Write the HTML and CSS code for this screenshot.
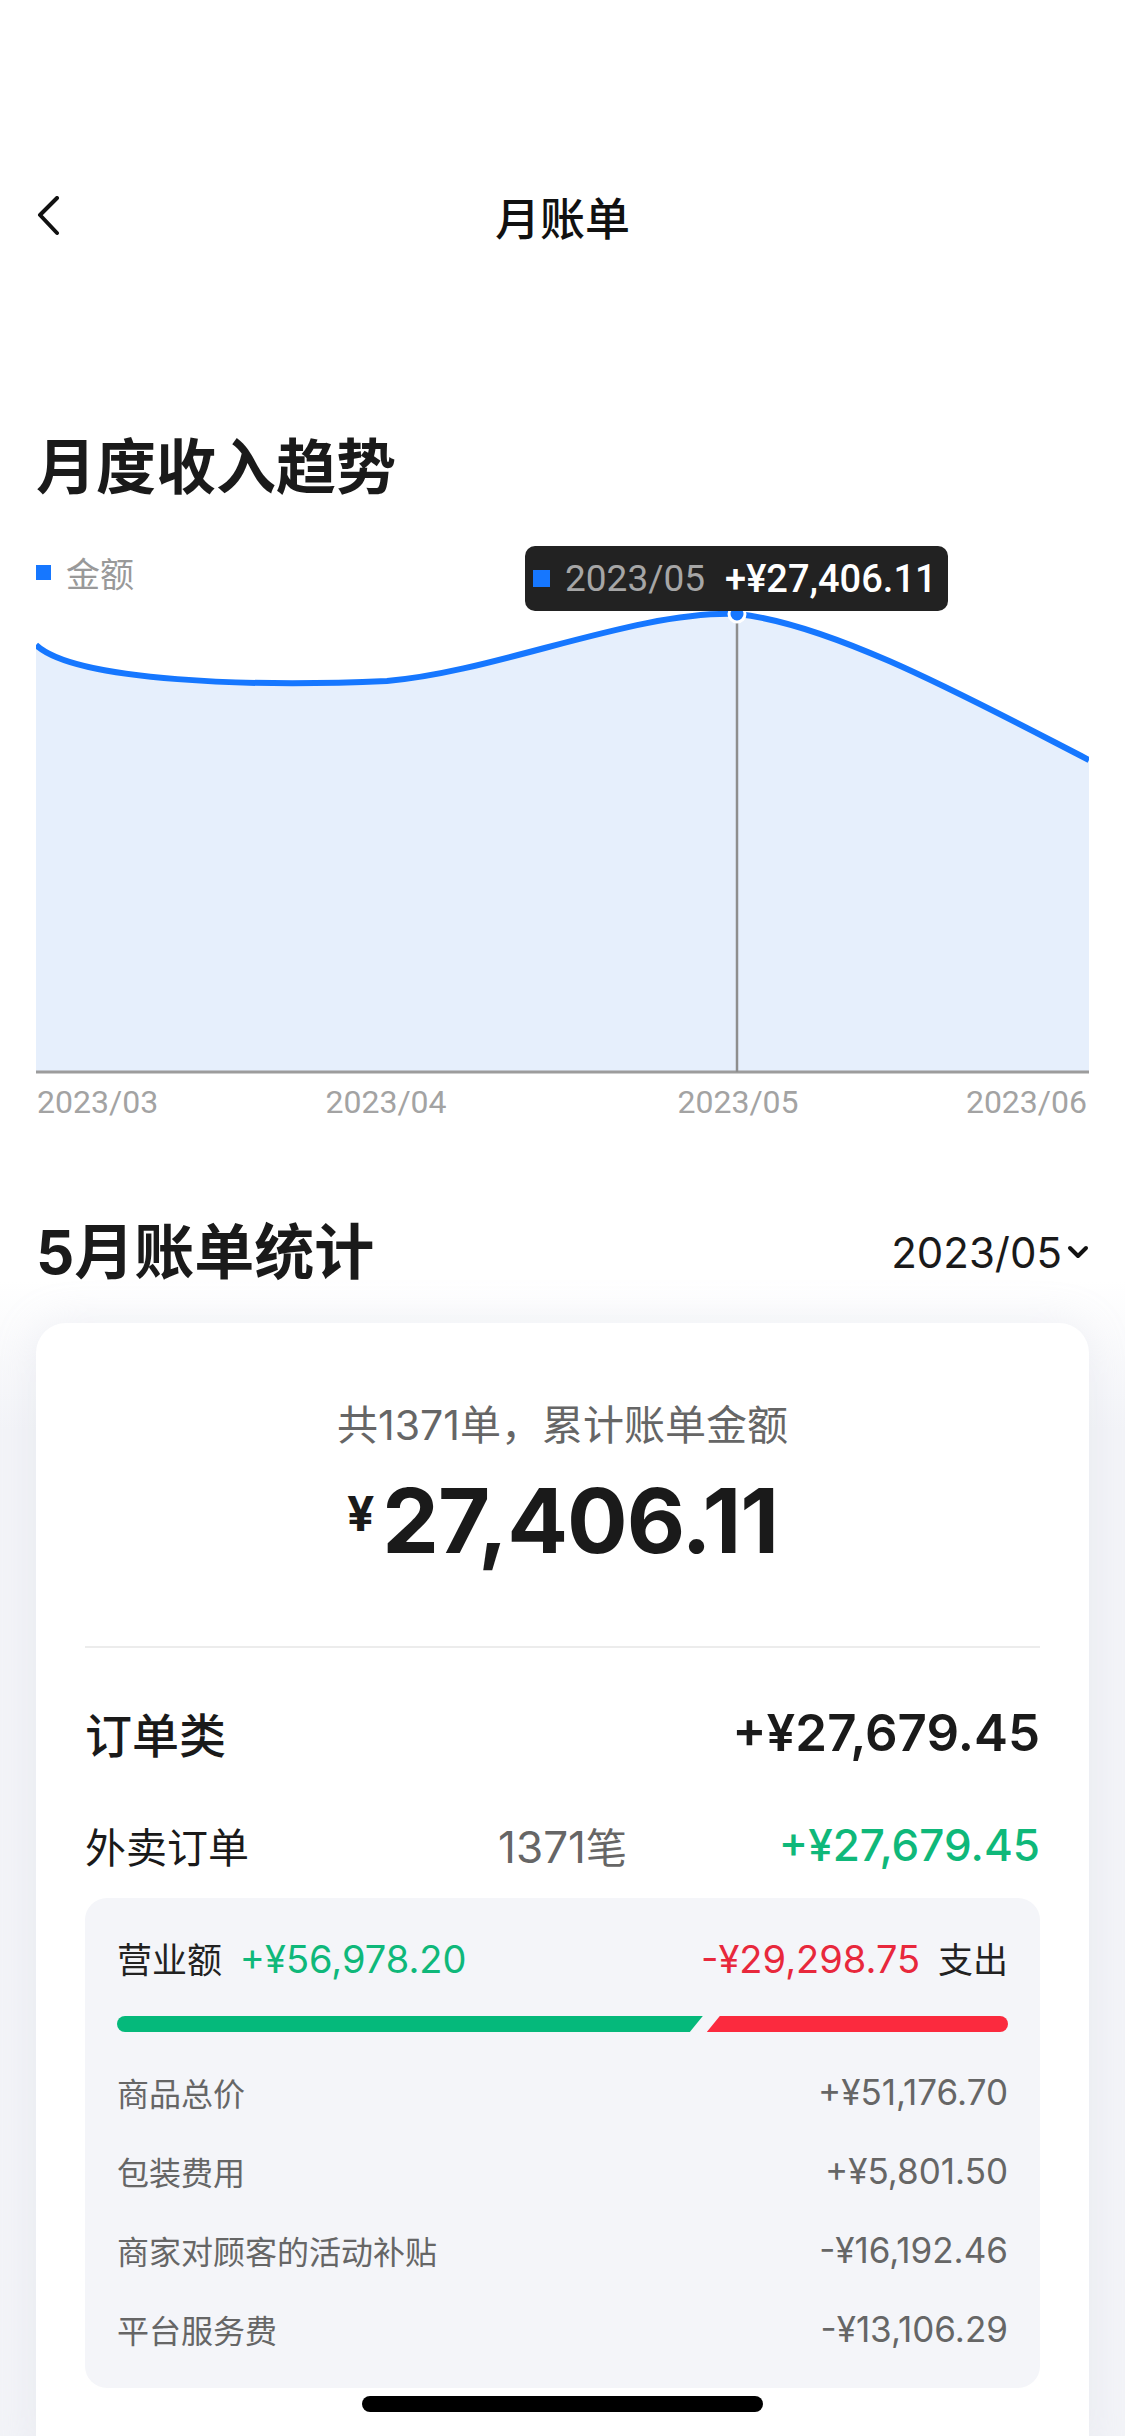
FILE: index.html
```html
<!DOCTYPE html>
<html lang="zh-CN">
<head>
    <meta charset="UTF-8">
    <meta name="viewport" content="width=device-width, initial-scale=1.0">
    <title>月账单</title>
    <link rel="stylesheet" href="styles.css">
</head>
<body>
    <div class="status-bar"></div>

    <header class="navbar">
        <button class="back-btn" aria-label="返回">
            <svg width="24" height="40" viewBox="0 0 24 40">
                <path d="M20 2 L3 19 L20 37" fill="none" stroke="#111" stroke-width="4" stroke-linecap="round" stroke-linejoin="round"/>
            </svg>
        </button>
        <h1 class="nav-title">月账单</h1>
        <span></span>
    </header>

    <!-- 月度收入趋势 -->
    <section class="trend">
        <h2 class="section-title">月度收入趋势</h2>
        <div class="chart">
            <div class="legend">
                <span class="legend-mark"></span>
                <span>金额</span>
            </div>
            <div class="tooltip">
                <span class="legend-mark"></span>
                <span class="tooltip-date">2023/05</span>
                <span class="tooltip-value">+¥27,406.11</span>
            </div>
            <svg class="chart-svg" width="1053" height="538" viewBox="0 0 1053 538">
                <path class="chart-area" d="M0 53 C40 90 220 95 351 89 C460 80 600 18 702 22 C800 33 940 110 1053 168 L1053 480 L0 480 Z"/>
                <path class="chart-line" d="M0 53 C40 90 220 95 351 89 C460 80 600 18 702 22 C800 33 940 110 1053 168"/>
                <line class="chart-axis" x1="0" y1="480" x2="1053" y2="480"/>
                <line class="chart-pointer" x1="701" y1="24" x2="701" y2="480"/>
                <circle class="chart-dot" cx="701" cy="22" r="8"/>
                <text class="chart-label" x="1" y="521" text-anchor="start">2023/03</text>
                <text class="chart-label" x="350" y="521" text-anchor="middle">2023/04</text>
                <text class="chart-label" x="702" y="521" text-anchor="middle">2023/05</text>
                <text class="chart-label" x="1051" y="521" text-anchor="end">2023/06</text>
            </svg>
        </div>
    </section>

    <!-- 5月账单统计 -->
    <section class="bill">
        <div class="bill-header">
            <h2 class="section-title">5月账单统计</h2>
            <button class="month-picker">
                <span>2023/05</span>
                <svg width="22" height="14" viewBox="0 0 22 14">
                    <path d="M3 3 L11 11 L19 3" fill="none" stroke="#111" stroke-width="4" stroke-linecap="round" stroke-linejoin="round"/>
                </svg>
            </button>
        </div>

        <div class="bill-card">
            <p class="summary">共1371单，累计账单金额</p>
            <div class="total">
                <span class="total-currency">¥</span>
                <span class="total-value">27,406.11</span>
            </div>

            <div class="divider"></div>

            <div class="category-row">
                <span>订单类</span>
                <span class="category-amount">+¥27,679.45</span>
            </div>

            <div class="order-row">
                <span class="order-name">外卖订单</span>
                <span class="order-count"><span class="num">1371</span>笔</span>
                <span class="order-amount">+¥27,679.45</span>
            </div>

            <div class="detail-box">
                <div class="flow-row">
                    <div>
                        <span>营业额</span>
                        <span class="income">+¥56,978.20</span>
                    </div>
                    <div>
                        <span class="expense">-¥29,298.75</span>
                        <span>支出</span>
                    </div>
                </div>
                <div class="flow-bar">
                    <div class="bar-income" style="flex-grow: 56978.2"></div>
                    <div class="bar-expense" style="flex-grow: 29298.75"></div>
                </div>
                <ul class="detail-list">
                    <li><span>商品总价</span><span class="detail-value">+¥51,176.70</span></li>
                    <li><span>包装费用</span><span class="detail-value">+¥5,801.50</span></li>
                    <li><span>商家对顾客的活动补贴</span><span class="detail-value">-¥16,192.46</span></li>
                    <li><span>平台服务费</span><span class="detail-value">-¥13,106.29</span></li>
                </ul>
            </div>
        </div>
    </section>

    <div class="home-indicator"></div>
</body>
</html>
```

FILE: styles.css
```css
body {
    margin: 0;
    width: 1125px;
    background-color: #ffffff;
    color: #1a1a1a;
    font-family: Inter, "Noto Sans CJK SC", sans-serif;
    overflow: hidden;
}

.status-bar {
    height: 150px;
}

/* top navigation */
.navbar {
    height: 132px;
    display: grid;
    grid-template-columns: 1fr auto 1fr;
    align-items: center;
    padding: 0 37px;
}

.back-btn {
    justify-self: start;
    padding: 0;
    border: none;
    background: none;
    display: flex;
}

.nav-title {
    margin: 0;
    font-size: 45px;
    font-weight: 500;
    color: #111;
}

.section-title {
    margin: 0;
    font-size: 60px;
    line-height: 72px;
    font-weight: 700;
    color: #1a1a1a;
}

/* trend chart */
.trend {
    padding: 149px 36px 0;
}

.chart {
    position: relative;
    margin-top: 49px;
}

.legend {
    height: 40px;
    display: flex;
    align-items: center;
    gap: 15px;
    font-size: 34px;
    color: #999;
}

.legend-mark {
    width: 15px;
    height: 15px;
    background-color: #1677ff;
}

.chart-svg {
    display: block;
}

.chart-area {
    fill: #e6effc;
}

.chart-line {
    fill: none;
    stroke: #1677ff;
    stroke-width: 6;
}

.chart-axis {
    stroke: #9c9c9c;
    stroke-width: 3;
}

.chart-pointer {
    stroke: #8e8e8e;
    stroke-width: 2.5;
}

.chart-dot {
    fill: #1677ff;
    stroke: #ffffff;
    stroke-width: 3;
}

.chart-label {
    font-family: Roboto, sans-serif;
    font-size: 32px;
    fill: #a3a3a3;
}

.tooltip {
    position: absolute;
    top: -6px;
    left: 489px;
    height: 65px;
    padding: 0 11px 0 8px;
    display: flex;
    align-items: center;
    border-radius: 10px;
    background-color: #222;
    font-family: Roboto, sans-serif;
    font-size: 37px;
    white-space: nowrap;
}

.tooltip .legend-mark {
    width: 17px;
    height: 17px;
}

.tooltip-date {
    margin-left: 15px;
    color: #a6a6a6;
}

.tooltip-value {
    margin-left: 20px;
    color: #ffffff;
    font-size: 38px;
    font-weight: 500;
}

/* monthly bill */
.bill {
    padding: 86px 36px 0;
    background: linear-gradient(to bottom, #ffffff 0, #ffffff 150px, #f3f4f8 300px);
}

.bill-header {
    display: flex;
    justify-content: space-between;
    align-items: center;
}

.month-picker {
    display: flex;
    align-items: center;
    gap: 5px;
    padding: 0;
    border: none;
    background: none;
    font-family: inherit;
    font-size: 42px;
    color: #1a1a1a;
}

.bill-card {
    margin-top: 35px;
    padding: 77px 49px 80px;
    background-color: #ffffff;
    border-radius: 30px;
    box-shadow: 0 0 40px rgba(200, 205, 220, 0.25);
}

.summary {
    margin: 0;
    text-align: center;
    font-size: 41px;
    line-height: 50px;
    color: #666;
}

.total {
    margin-top: 16px;
    height: 110px;
    display: flex;
    justify-content: center;
    align-items: flex-start;
    font-weight: 700;
    color: #1a1a1a;
}

.total-currency {
    margin-top: 26px;
    margin-right: 8px;
    font-size: 48px;
    line-height: 44px;
}

.total-value {
    font-size: 90px;
    line-height: 110px;
    letter-spacing: -1px;
}

.divider {
    margin-top: 70px;
    height: 2px;
    background-color: #ececec;
}

.category-row {
    margin-top: 49px;
    height: 70px;
    display: flex;
    justify-content: space-between;
    align-items: center;
    font-size: 47px;
    font-weight: 500;
}

.category-amount {
    font-size: 51px;
    font-weight: 600;
}

.order-row {
    margin-top: 48px;
    height: 60px;
    display: grid;
    grid-template-columns: 1fr auto 1fr;
    align-items: center;
    font-size: 41px;
}

.order-count {
    color: #666;
}

.order-count .num {
    font-size: 44px;
}

.order-amount {
    justify-self: end;
    color: #0fb87a;
    font-size: 44px;
    font-weight: 500;
}

.detail-box {
    margin-top: 23px;
    padding: 34px 32px 20px;
    background-color: #f4f5f9;
    border-radius: 22px;
}

.flow-row {
    height: 50px;
    display: flex;
    justify-content: space-between;
    align-items: center;
    font-size: 35px;
    color: #222;
}

.income {
    margin-left: 8px;
    color: #0fb87a;
    font-size: 38px;
}

.expense {
    margin-right: 8px;
    color: #e8283c;
    font-size: 38px;
}

.flow-bar {
    margin-top: 34px;
    height: 16px;
    display: flex;
    gap: 4px;
}

.bar-income {
    background-color: #05b97b;
    border-radius: 8px 0 0 8px;
    clip-path: polygon(0 0, 100% 0, calc(100% - 13px) 100%, 0 100%);
}

.bar-expense {
    background-color: #fb2a3e;
    border-radius: 0 8px 8px 0;
    clip-path: polygon(13px 0, 100% 0, 100% 100%, 0 100%);
}

.detail-list {
    margin: 20px 0 0;
    padding: 0;
    list-style: none;
}

.detail-list li {
    height: 79px;
    display: flex;
    justify-content: space-between;
    align-items: center;
    font-size: 32px;
    color: #666;
}

.detail-value {
    font-size: 35px;
}

.home-indicator {
    position: fixed;
    left: 362px;
    bottom: 24px;
    width: 401px;
    height: 16px;
    border-radius: 8px;
    background-color: #000;
}
```
